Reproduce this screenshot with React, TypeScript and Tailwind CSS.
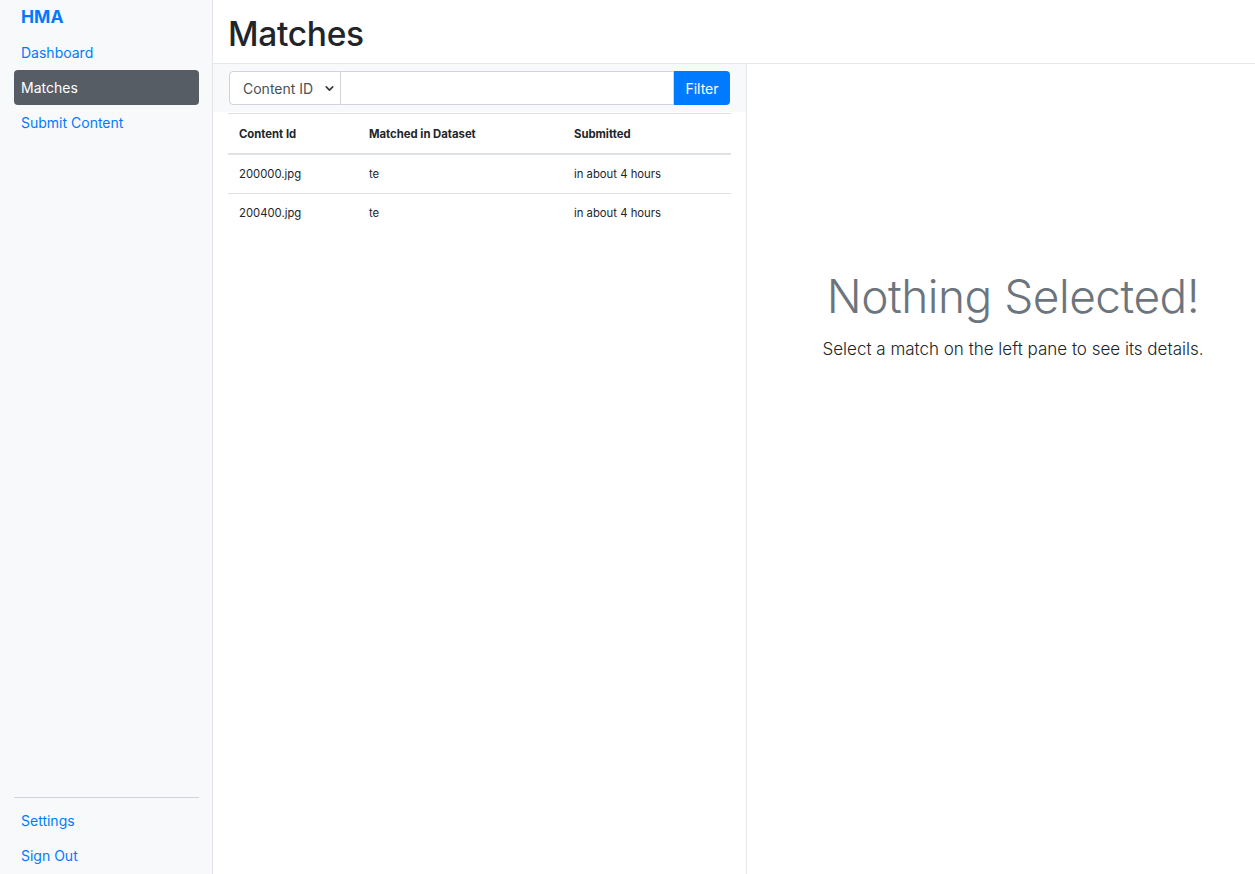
import { ChevronDown } from "lucide-react";

type Match = { contentId: string; dataset: string; submitted: string };

const matches: Match[] = [
  { contentId: "200000.jpg", dataset: "te", submitted: "in about 4 hours" },
  { contentId: "200400.jpg", dataset: "te", submitted: "in about 4 hours" },
];

function NavLink({ label, active }: { label: string; active?: boolean }) {
  return (
    <a
      href="#"
      className={
        active
          ? "flex h-[35px] items-center rounded-[4px] bg-[#575d65] px-[7px] text-[14px] text-white"
          : "flex h-[35px] items-center px-[7px] text-[14px] text-[#007bff]"
      }
    >
      {label}
    </a>
  );
}

function Sidebar() {
  return (
    <aside className="flex h-full w-[213px] shrink-0 flex-col border-r border-[#e3e5e8] bg-[#f8f9fa] pl-[14px] pr-[13px] pb-[1px]">
      <div className="flex h-[35px] items-center px-[7px] text-[17.5px] font-bold text-[#007bff]">
        HMA
      </div>
      <nav className="flex flex-col">
        <NavLink label="Dashboard" />
        <NavLink label="Matches" active />
        <NavLink label="Submit Content" />
      </nav>
      <div className="mt-auto">
        <hr className="mb-[5px] border-t border-[#ced4da]" />
        <NavLink label="Settings" />
        <NavLink label="Sign Out" />
      </div>
    </aside>
  );
}

function FilterBar() {
  return (
    <div className="flex bg-[#f8f9fa] px-[16px] py-[7px]">
      <div className="relative w-[112px] shrink-0">
        <select className="h-[34px] w-full appearance-none rounded-l-[4px] border border-[#ced4da] bg-white pl-[13px] pr-6 text-[14px] text-[#495057] outline-none">
          <option>Content ID</option>
        </select>
        <ChevronDown
          className="pointer-events-none absolute right-[5px] top-[11px] text-[#343a40]"
          size={13}
          strokeWidth={3}
        />
      </div>
      <input
        type="text"
        className="h-[34px] min-w-0 flex-1 border border-l-0 border-[#ced4da] bg-white px-3 text-[14px] outline-none"
      />
      <button className="h-[34px] w-[56px] shrink-0 rounded-r-[4px] bg-[#007bff] text-[14px] text-white">
        Filter
      </button>
    </div>
  );
}

function MatchTable() {
  return (
    <div className="px-[15px] pt-[1px]">
      <table className="w-full border-collapse text-left text-[11.3px] leading-[17px] text-[#212529]">
        <colgroup>
          <col className="w-[130px]" />
          <col className="w-[205px]" />
          <col />
        </colgroup>
        <thead>
          <tr className="border-t border-b-2 border-[#dee2e6]">
            <th className="h-[40px] px-[11px] pb-[10px] align-bottom font-bold">Content Id</th>
            <th className="h-[40px] px-[11px] pb-[10px] align-bottom font-bold">Matched in Dataset</th>
            <th className="h-[40px] px-[11px] pb-[10px] align-bottom font-bold">Submitted</th>
          </tr>
        </thead>
        <tbody>
          {matches.map((m) => (
            <tr key={m.contentId} className="border-b border-[#dee2e6] last:border-b-0">
              <td className="px-[11px] pt-[11px] pb-[10px] align-top">{m.contentId}</td>
              <td className="px-[11px] pt-[11px] pb-[10px] align-top">{m.dataset}</td>
              <td className="px-[11px] pt-[11px] pb-[10px] align-top">{m.submitted}</td>
            </tr>
          ))}
        </tbody>
      </table>
    </div>
  );
}

export default function App() {
  return (
    <div className="flex h-[874px] w-full bg-white font-['Inter','Liberation_Sans',sans-serif] text-[#212529]">
      <Sidebar />
      <main className="flex min-w-0 flex-1 flex-col">
        <header className="flex h-[64px] shrink-0 items-center border-b border-[#e6e8eb] pl-[15px] pt-[7px]">
          <h1 className="text-[33.5px] font-medium leading-none tracking-[-0.3px] text-[#212529]">Matches</h1>
        </header>
        <div className="flex min-h-0 flex-1">
          <section className="w-[534px] shrink-0 border-r border-[#e6e8eb]">
            <FilterBar />
            <MatchTable />
          </section>
          <section className="flex flex-1 flex-col items-center pl-[24px] pt-[205px] text-center">
            <h2 className="text-[46px] font-light leading-[1.2] tracking-[-0.5px] text-[#6c757d]">
              Nothing Selected!
            </h2>
            <p className="mt-[13px] text-[17px] font-light text-[#212529]">
              Select a match on the left pane to see its details.
            </p>
          </section>
        </div>
      </main>
    </div>
  );
}
